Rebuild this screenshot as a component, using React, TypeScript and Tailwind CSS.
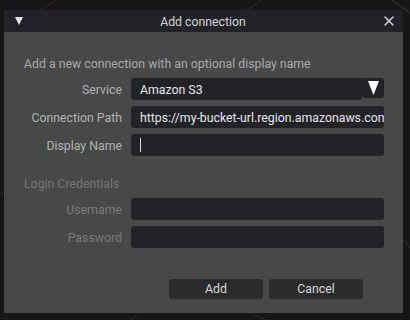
import { X } from 'lucide-react';

const Field = ({ children }: { children?: React.ReactNode }) => (
  <div className="flex h-[22px] items-center overflow-hidden whitespace-nowrap rounded-[3px] bg-[#222327] pl-[9px] pt-[2px] text-[12.3px] text-[#e6e6e6]">
    {children}
  </div>
);

const Label = ({ text, dim }: { text: string; dim?: boolean }) => (
  <div className={`flex h-[22px] items-center justify-end pt-[2px] text-[12.3px] ${dim ? 'text-[#7a7a7a]' : 'text-[#b2b2b2]'}`}>
    {text}
  </div>
);

export default function App() {
  return (
    <div
      className="relative h-[320px] w-[410px] overflow-hidden bg-[#161616] pl-[4px] pt-[10px]"
      style={{ fontFamily: 'Roboto, "Noto Sans", sans-serif' }}
    >
      {/* faint background lines */}
      <svg className="absolute inset-0" width="410" height="320">
        <line x1="40" y1="10" x2="57" y2="0" stroke="#3a2426" strokeWidth="1" />
        <line x1="244" y1="12" x2="262" y2="0" stroke="#2a2a2a" strokeWidth="1" />
        <line x1="392" y1="0" x2="410" y2="13" stroke="#2c2c2c" strokeWidth="1.5" />
        <line x1="403" y1="238" x2="410" y2="248" stroke="#3a2628" strokeWidth="1" />
        <line x1="250" y1="313" x2="266" y2="320" stroke="#2c2c2c" strokeWidth="1" />
        <line x1="130" y1="320" x2="140" y2="313" stroke="#2c2c2c" strokeWidth="1" />
        <line x1="0" y1="196" x2="4" y2="190" stroke="#2a2a2a" strokeWidth="1" />
      </svg>

      <div className="relative flex h-[303px] w-[399px] flex-col overflow-hidden rounded-t-[4px] bg-[#484848]">
        {/* title bar */}
        <div className="flex h-[22px] items-center bg-[#222327] pl-[11px] pr-[6px]">
          <svg width="8" height="8" viewBox="0 0 8 8">
            <polygon points="0,0 8,0 4,8" fill="#e2e2e2" />
          </svg>
          <div className="flex-1 pl-[2px] pt-[3px] text-center text-[12.3px] text-[#d6d6d6]">Add connection</div>
          <X size={16} strokeWidth={2} color="#d6d6d6" />
        </div>

        {/* body */}
        <div className="flex flex-col pl-[20px] pr-[19px] pt-[24px]">
          <div className="h-[16px] text-[12.3px] leading-[16px] text-[#a9a9a9]">
            Add a new connection with an optional display name
          </div>

          <div className="mt-[6px] grid grid-cols-[98px_1fr] gap-x-[9px] gap-y-[6px]">
            <Label text="Service" />
            <div className="flex h-[22px] items-start">
              <div className="flex h-[22px] flex-1 items-center rounded-l-[3px] rounded-br-[3px] bg-[#222327] pl-[9px] pt-[2px] text-[12.3px] text-[#e6e6e6]">
                Amazon S3
              </div>
              <div className="flex h-[20px] w-[22px] items-center justify-center rounded-[3px] bg-[#222327]">
                <svg width="11" height="14" viewBox="0 0 11 14">
                  <polygon points="0,0 11,0 5.5,14" fill="#ffffff" />
                </svg>
              </div>
            </div>

            <Label text="Connection Path" />
            <Field>https://my-bucket-url.region.amazonaws.com</Field>

            <Label text="Display Name" />
            <Field>
              <div className="mb-[2px] h-[14px] w-px bg-[#d8d8d8]" />
            </Field>
          </div>

          <div className="mt-[20px] h-[16px] text-[12.3px] leading-[16px] text-[#777777]">Login Credentials</div>

          <div className="mt-[6px] grid grid-cols-[98px_1fr] gap-x-[9px] gap-y-[6px]">
            <Label text="Username" dim />
            <Field />
            <Label text="Password" dim />
            <Field />
          </div>

          <div className="mt-[31px] flex justify-end gap-[6px] pr-[21px]">
            <button className="h-[20px] w-[94px] rounded-[3px] bg-[#2b2b2b] pt-[1px] text-[12.3px] text-[#d8d8d8]">Add</button>
            <button className="h-[20px] w-[94px] rounded-[3px] bg-[#2b2b2b] pt-[1px] text-[12.3px] text-[#d8d8d8]">Cancel</button>
          </div>
        </div>
      </div>
    </div>
  );
}
